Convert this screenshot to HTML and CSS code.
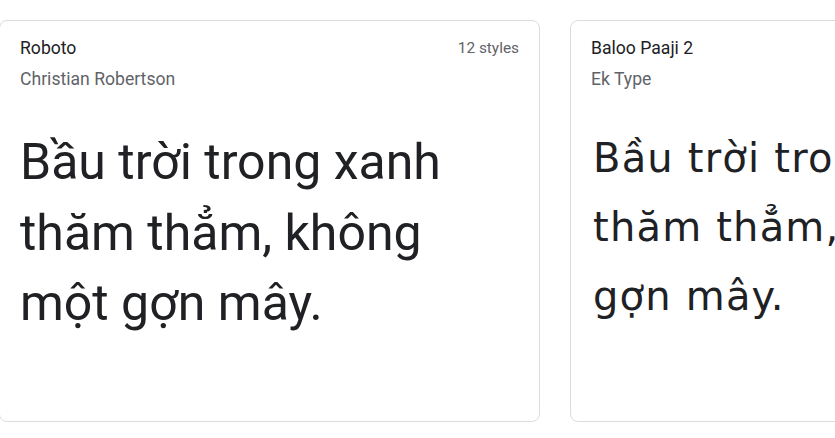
FILE: index.html
```html
<!DOCTYPE html>
<html lang="vi">
<head>
<meta charset="utf-8">
<title>Fonts</title>
<link rel="stylesheet" href="styles.css">
</head>
<body>
<div class="row">
  <article class="card">
    <header class="card-head">
      <div class="meta">
        <div class="family">Roboto</div>
        <div class="designer">Christian Robertson</div>
      </div>
      <div class="styles">12 styles</div>
    </header>
    <p class="sample sample-roboto">Bầu trời trong xanh thăm thẳm, không một gợn mây.</p>
  </article>
  <article class="card">
    <header class="card-head">
      <div class="meta">
        <div class="family">Baloo Paaji 2</div>
        <div class="designer">Ek Type</div>
      </div>
    </header>
    <p class="sample sample-baloo">Bầu trời trong xanh<br>thăm thẳm, không một<br>gợn mây.</p>
  </article>
</div>
</body>
</html>
```

FILE: styles.css
```css
html, body {
  margin: 0;
  padding: 0;
  background: #ffffff;
  overflow: hidden;
}

body {
  width: 835px;
  height: 438px;
  font-family: Roboto, "Noto Sans", Arial, sans-serif;
  color: #202124;
}

.row {
  display: flex;
  gap: 30px;
  padding-top: 20px;
  margin-left: -1px;
  width: 1200px;
}

.card {
  flex: 0 0 auto;
  box-sizing: border-box;
  width: 541px;
  height: 402px;
  border: 1px solid #dadce0;
  border-radius: 8px;
  padding: 14px 20px 20px 20px;
  background: #fff;
}

.card-head {
  display: flex;
  justify-content: space-between;
  align-items: flex-start;
}

.family {
  font-size: 17.6px;
  line-height: 26.4px;
  color: #202124;
}

.designer {
  margin-top: 4.4px;
  font-size: 17.6px;
  line-height: 26.4px;
  color: #5f6368;
}

.styles {
  font-size: 15.4px;
  line-height: 26.4px;
  color: #5f6368;
}

.sample {
  margin: 35px 0 0 0;
  font-size: 50px;
  line-height: 70.4px;
  color: #202124;
}

.sample-roboto {
  font-family: Roboto, sans-serif;
  width: 480px;
}

.sample-baloo {
  margin-top: 32px;
  padding-left: 2px;
  font-family: "DejaVu Sans", "Open Sans", sans-serif;
  font-size: 40px;
  line-height: 69px;
  letter-spacing: 1.2px;
  white-space: nowrap;
}
```
